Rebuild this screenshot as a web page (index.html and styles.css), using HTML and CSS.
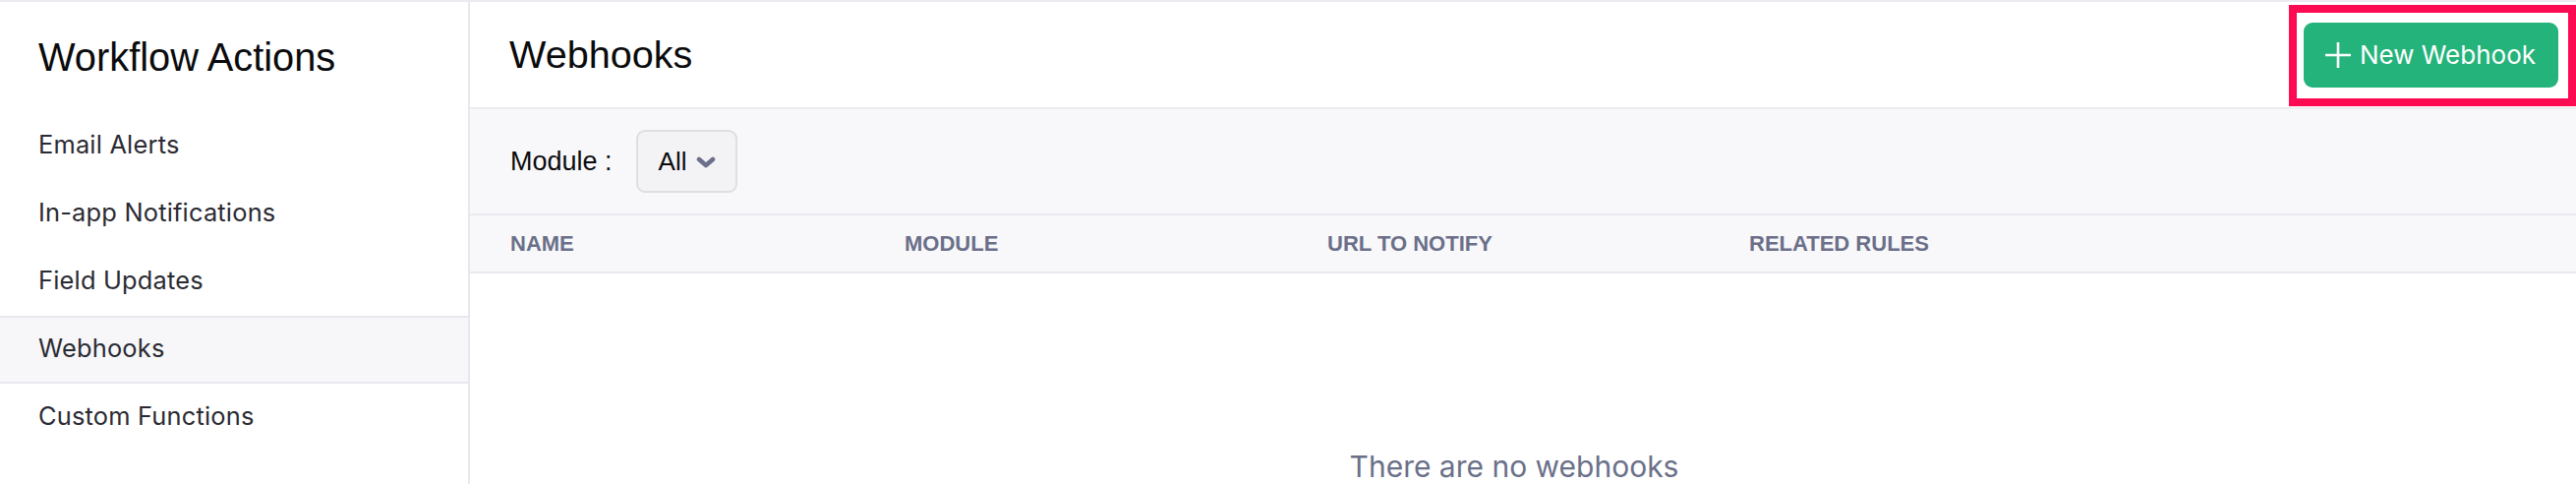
FILE: index.html
```html
<!DOCTYPE html>
<html lang="en">
<head>
<meta charset="utf-8">
<title>Webhooks</title>
<link rel="stylesheet" href="styles.css">
</head>
<body>
<div class="app">
  <aside class="sidebar">
    <div class="sidebar-head">Workflow Actions</div>
    <nav class="nav">
      <div class="nav-item">Email Alerts</div>
      <div class="nav-item">In-app Notifications</div>
      <div class="nav-item">Field Updates</div>
      <div class="nav-item active">Webhooks</div>
      <div class="nav-item">Custom Functions</div>
    </nav>
  </aside>
  <main class="main">
    <header class="main-head">
      <h1 class="title">Webhooks</h1>
      <button class="btn-new" type="button">
        <svg class="plus" width="28" height="28" viewBox="0 0 28 28" aria-hidden="true"><path d="M14 1v26M1 14h26" stroke="#fff" stroke-width="2.6" fill="none"/></svg>
        <span>New Webhook</span>
      </button>
      <div class="highlight"></div>
    </header>
    <div class="filter">
      <span class="filter-label">Module :</span>
      <div class="select">
        <span>All</span>
        <svg width="20" height="12" viewBox="0 0 20 12" aria-hidden="true"><path d="M3 3l7 6 7-6" stroke="#6b6f8a" stroke-width="4.6" fill="none" stroke-linecap="round" stroke-linejoin="round"/></svg>
      </div>
    </div>
    <div class="thead">
      <div class="th">NAME</div>
      <div class="th">MODULE</div>
      <div class="th">URL TO NOTIFY</div>
      <div class="th">RELATED RULES</div>
    </div>
    <div class="empty">There are no webhooks</div>
  </main>
</div>
</body>
</html>
```
FILE: styles.css
```css
* { box-sizing: border-box; }
html, body { margin: 0; padding: 0; background: #fff; }
body {
  border-top: 2px solid #ebebf0;
  height: 492px;
  overflow: hidden;
}
.app {
  display: flex;
  height: 490px;
}
.sidebar {
  width: 478px;
  flex: none;
  border-right: 2px solid #e8e7ed;
  background: #fff;
}
.sidebar-head {
  height: 112px;
  display: flex;
  align-items: center;
  padding-left: 39px;
  font-family: "Liberation Sans", Arial, sans-serif;
  font-size: 39.8px;
  color: #0b0b0d;
}
.nav { display: flex; flex-direction: column; }
.nav-item {
  height: 69px;
  display: flex;
  align-items: center;
  padding: 0 0 5px 39px;
  border-top: 2px solid transparent;
  border-bottom: 2px solid transparent;
  font-family: Inter, "Noto Sans", sans-serif;
  font-size: 25.4px;
  letter-spacing: 0.2px;
  color: #2b2b33;
}
.nav-item.active {
  background: #f7f7fa;
  border-color: #e9e8ef;
}
.main {
  flex: 1;
  display: flex;
  flex-direction: column;
  min-width: 0;
}
.main-head {
  position: relative;
  height: 110px;
  border-bottom: 2px solid #ececf0;
  display: flex;
  align-items: center;
  justify-content: space-between;
  padding: 0 18px 0 40px;
}
.title {
  margin: 0;
  font-family: "Liberation Sans", Arial, sans-serif;
  font-weight: normal;
  font-size: 39.6px;
  color: #0b0b0d;
}
.btn-new {
  height: 66px;
  display: flex;
  align-items: center;
  gap: 8px;
  padding: 0 23px 0 21px;
  border: none;
  border-radius: 9px;
  background: #24b37a;
  color: #fff;
  font-family: Inter, "Noto Sans", sans-serif;
  font-size: 26px;
  font-weight: 400;
  cursor: pointer;
}
.plus { display: block; }
.highlight {
  position: absolute;
  right: 0;
  top: 3px;
  width: 292px;
  height: 103px;
  border: 8px solid #fd0a52;
  pointer-events: none;
}
.filter {
  height: 109px;
  border-bottom: 2px solid #e9e9ef;
  background: #f8f8fa;
  display: flex;
  align-items: center;
  gap: 24px;
  padding-left: 41px;
}
.filter-label {
  font-family: "Liberation Sans", Arial, sans-serif;
  font-size: 27px;
  color: #0b0b0d;
}
.select {
  width: 103px;
  height: 64px;
  display: flex;
  align-items: center;
  justify-content: space-between;
  padding: 0 20px 0 21px;
  background: #f3f3f6;
  border: 2px solid #dfdfe3;
  border-radius: 9px;
  font-family: "Liberation Sans", Arial, sans-serif;
  font-size: 26px;
  color: #0b0b0d;
}
.select svg { display: block; margin-top: 2px; }
.thead {
  height: 59px;
  border-bottom: 2px solid #e9e9ef;
  background: #f8f8fa;
  display: grid;
  grid-template-columns: 401px 430px 429px 1fr;
  align-items: center;
  padding-left: 41px;
}
.th {
  font-family: "Liberation Sans", Arial, sans-serif;
  font-weight: bold;
  font-size: 22px;
  color: #6b6f89;
}
.empty {
  padding: 178px 18px 0 0;
  text-align: center;
  font-family: Inter, "Noto Sans", sans-serif;
  font-size: 30px;
  color: #6b7089;
}
```
